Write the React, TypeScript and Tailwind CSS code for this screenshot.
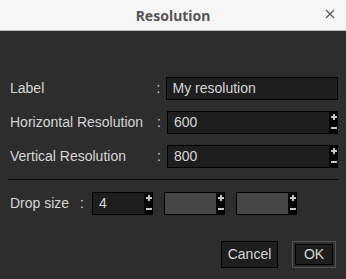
import React from "react";

function Spinner() {
  return (
    <div className="flex h-[23px] w-[8px] flex-col items-center justify-between bg-black py-[2px]">
      <svg width="8" height="8" viewBox="0 0 8 8">
        <path d="M1 4h6M4 1v6" stroke="#c8c8c8" strokeWidth="2" />
      </svg>
      <svg width="8" height="8" viewBox="0 0 8 8">
        <path d="M1 4h6" stroke="#c8c8c8" strokeWidth="2" />
      </svg>
    </div>
  );
}

function NumField({ value, width, disabled }: { value?: string; width: string; disabled?: boolean }) {
  return (
    <div className="flex items-center">
      <div
        className={`flex h-[23px] ${width} items-center border border-black px-[6px] ${
          disabled ? "bg-[#474747]" : "bg-[#1e1e1e]"
        }`}
      >
        {value}
      </div>
      <Spinner />
    </div>
  );
}

export default function App() {
  const font = { fontFamily: '"Liberation Sans", Arial, sans-serif' };
  return (
    <div className="flex h-[279px] w-[346px] flex-col overflow-hidden bg-[#2d2d2d]">
      <div className="relative flex h-[31px] shrink-0 items-center justify-center border-b border-[#bdbdbd] bg-[#f6f6f6]">
        <span
          className="text-[14px] font-bold text-[#555]"
          style={{ fontFamily: '"Noto Sans", "Open Sans", sans-serif' }}
        >
          Resolution
        </span>
        <svg className="absolute right-[11px] top-[9px]" width="10" height="10" viewBox="0 0 10 10">
          <path d="M1 1l8 8M9 1l-8 8" stroke="#5a5a5a" strokeWidth="1.3" />
        </svg>
      </div>

      <div className="flex flex-col px-[8px] text-[14px] text-[#d6d6d6]" style={font}>
        <div className="mt-[46px] flex h-[23px] items-center">
          <span className="w-[149px] pl-[2px]">Label</span>
          <span className="w-[9px]">:</span>
          <div className="flex h-[23px] w-[173px] items-center border border-black bg-[#1e1e1e] px-[6px]">
            My resolution
          </div>
        </div>
        <div className="mt-[11px] flex h-[23px] items-center">
          <span className="w-[150px] pl-[2px]">Horizontal Resolution</span>
          <span className="w-[10px]">:</span>
          <NumField value="600" width="w-[163px]" />
        </div>
        <div className="mt-[11px] flex h-[23px] items-center">
          <span className="w-[150px] pl-[2px]">Vertical Resolution</span>
          <span className="w-[10px]">:</span>
          <NumField value="800" width="w-[163px]" />
        </div>

        <div className="mt-[11px] h-px w-[331px] bg-[#111]" />

        <div className="mt-[12px] flex h-[23px] items-center">
          <span className="w-[72px] pl-[2px]">Drop size</span>
          <span className="w-[12px]">:</span>
          <NumField value="4" width="w-[53px]" />
          <div className="ml-[11px]">
            <NumField width="w-[53px]" disabled />
          </div>
          <div className="ml-[11px]">
            <NumField width="w-[53px]" disabled />
          </div>
        </div>

        <div className="mt-[26px] flex justify-end gap-[14px] pr-[2px]">
          <button className="h-[27px] w-[57px] border border-black bg-[#1e1e1e] text-[14px] text-[#d6d6d6]">
            Cancel
          </button>
          <button className="h-[27px] w-[44px] border border-[#555] bg-[#2d2d2d] p-[2px]">
            <div className="flex h-full w-full items-center justify-center border border-black bg-[#1e1e1e] text-[14px] text-[#d6d6d6]">
              OK
            </div>
          </button>
        </div>
      </div>
    </div>
  );
}
